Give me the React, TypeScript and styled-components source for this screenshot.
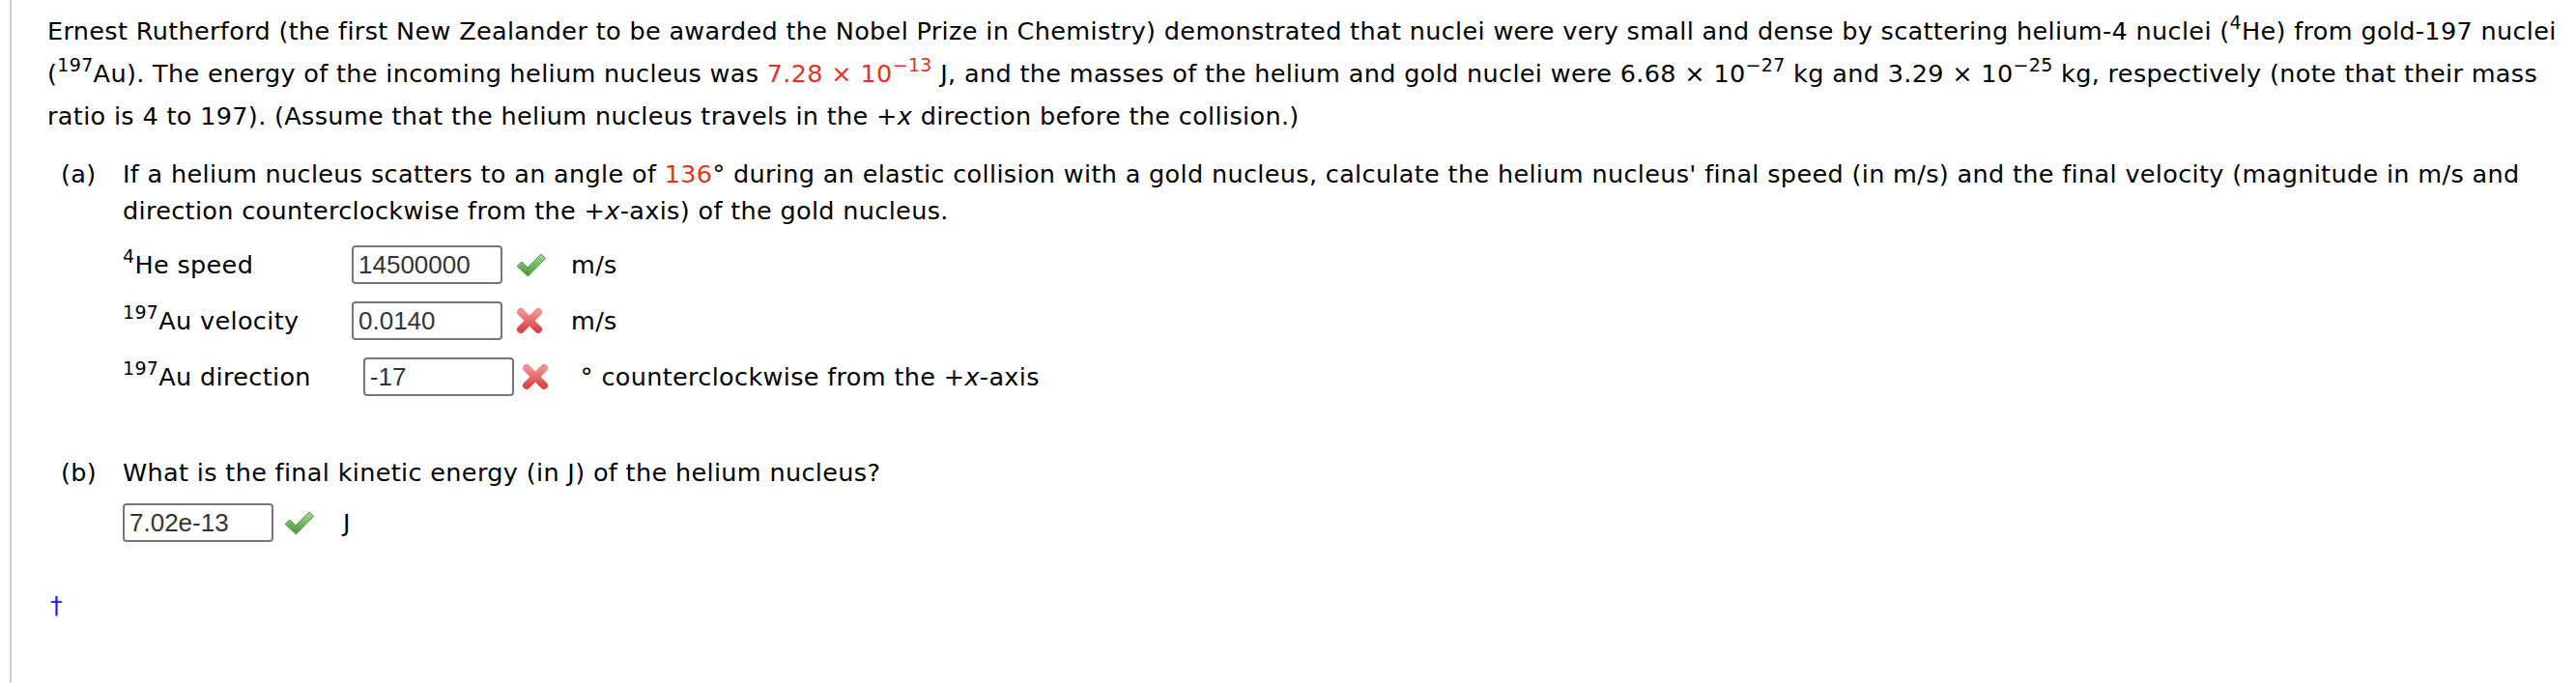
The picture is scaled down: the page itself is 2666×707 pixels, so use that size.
import React from "react";
import styled, { createGlobalStyle } from "styled-components";

const GlobalStyle = createGlobalStyle`
  html, body { margin: 0; padding: 0; background: #fff; }
  body { font-family: "DejaVu Sans", Verdana, sans-serif; color: #000; }
`;

const Page = styled.div`
  margin-left: 10px;
  border-left: 2px solid #d0d0d0;
  min-height: 707px;
  box-sizing: border-box;
  padding: 10px 0 0 37px;
  font-size: 25.5px;
  letter-spacing: 0.34px;
`;

const Intro = styled.p`
  margin: 0;
  line-height: 44px;
  white-space: nowrap;
`;

const Sup = styled.sup`
  font-size: 19px;
  vertical-align: 11px;
  line-height: 0;
`;

const Red = styled.span`
  color: #e8321f;
`;

const Part = styled.div<{ $top: number }>`
  display: flex;
  margin-top: ${(p) => p.$top}px;
  padding-left: 14px;
`;

const PartLabel = styled.div`
  width: 64px;
  flex: none;
  line-height: 38px;
`;

const PartBody = styled.div`
  flex: 1;
  min-width: 0;
`;

const Question = styled.p`
  margin: 0;
  line-height: 38px;
  white-space: nowrap;
`;

const Rows = styled.div<{ $top: number }>`
  display: flex;
  flex-direction: column;
  gap: 18px;
  margin-top: ${(p) => p.$top}px;
`;

const Row = styled.div`
  display: flex;
  align-items: center;
  height: 40px;
`;

const RowLabel = styled.div`
  min-width: 183px;
  margin-right: 54px;
  white-space: nowrap;
`;

const AnswerBox = styled.div`
  width: 156px;
  height: 40px;
  box-sizing: border-box;
  border: 2px solid #767676;
  border-radius: 4px;
  padding: 0 5px;
  display: flex;
  align-items: center;
  font-family: "Liberation Sans", Arial, sans-serif;
  font-size: 26px;
  letter-spacing: 0;
  color: #333;
`;

const IconSlot = styled.span<{ $ml: number }>`
  display: inline-flex;
  margin-left: ${(p) => p.$ml}px;
`;

const Unit = styled.span<{ $ml: number }>`
  margin-left: ${(p) => p.$ml}px;
  white-space: nowrap;
`;

const Footer = styled.div`
  margin-top: 46px;
  padding-left: 3px;
  color: #1a1aff;
  line-height: 38px;
`;

const Check = () => (
  <svg width="33" height="28" viewBox="0 0 33 28">
    <defs>
      <linearGradient id="gck" x1="0" y1="0" x2="0" y2="1">
        <stop offset="0" stopColor="#a3da90" />
        <stop offset="1" stopColor="#449339" />
      </linearGradient>
    </defs>
    <path
      d="M2 15.5 L7 11 L13 17 L27 3 L31.5 7.5 L13.5 26 Z"
      fill="url(#gck)"
      stroke="#54a04a"
      strokeWidth="1"
      strokeLinejoin="round"
    />
  </svg>
);

const Cross = () => (
  <svg width="30" height="30" viewBox="0 0 30 30">
    <defs>
      <linearGradient id="gx" x1="0" y1="0" x2="0" y2="1">
        <stop offset="0" stopColor="#f38e8e" />
        <stop offset="1" stopColor="#dc4646" />
      </linearGradient>
    </defs>
    <g stroke="url(#gx)" strokeWidth="8" strokeLinecap="round">
      <line x1="6" y1="6" x2="24" y2="24" />
      <line x1="24" y1="6" x2="6" y2="24" />
    </g>
  </svg>
);

export default function App() {
  return (
    <>
      <GlobalStyle />
      <Page>
        <Intro>
          Ernest Rutherford (the first New Zealander to be awarded the Nobel Prize in Chemistry) demonstrated that nuclei were very small and dense by scattering helium-4 nuclei (<Sup>4</Sup>He) from gold-197 nuclei
          <br />
          (<Sup>197</Sup>Au). The energy of the incoming helium nucleus was <Red>7.28 × 10<Sup>−13</Sup></Red> J, and the masses of the helium and gold nuclei were 6.68 × 10<Sup>−27</Sup> kg and 3.29 × 10<Sup>−25</Sup> kg, respectively (note that their mass
          <br />
          ratio is 4 to 197). (Assume that the helium nucleus travels in the +<i>x</i> direction before the collision.)
        </Intro>

        <Part $top={19}>
          <PartLabel>(a)</PartLabel>
          <PartBody>
            <Question>
              If a helium nucleus scatters to an angle of <Red>136</Red>° during an elastic collision with a gold nucleus, calculate the helium nucleus' final speed (in m/s) and the final velocity (magnitude in m/s and
              <br />
              direction counterclockwise from the +<i>x</i>-axis) of the gold nucleus.
            </Question>
            <Rows $top={17}>
              <Row>
                <RowLabel><Sup>4</Sup>He speed</RowLabel>
                <AnswerBox>14500000</AnswerBox>
                <IconSlot $ml={13}><Check /></IconSlot>
                <Unit $ml={25}>m/s</Unit>
              </Row>
              <Row>
                <RowLabel><Sup>197</Sup>Au velocity</RowLabel>
                <AnswerBox>0.0140</AnswerBox>
                <IconSlot $ml={13}><Cross /></IconSlot>
                <Unit $ml={28}>m/s</Unit>
              </Row>
              <Row>
                <RowLabel><Sup>197</Sup>Au direction</RowLabel>
                <AnswerBox>-17</AnswerBox>
                <IconSlot $ml={7}><Cross /></IconSlot>
                <Unit $ml={32}>° counterclockwise from the +<i>x</i>-axis</Unit>
              </Row>
            </Rows>
          </PartBody>
        </Part>

        <Part $top={60}>
          <PartLabel>(b)</PartLabel>
          <PartBody>
            <Question>What is the final kinetic energy (in J) of the helium nucleus?</Question>
            <Rows $top={13}>
              <Row>
                <AnswerBox>7.02e-13</AnswerBox>
                <IconSlot $ml={10}><Check /></IconSlot>
                <Unit $ml={29}>J</Unit>
              </Row>
            </Rows>
          </PartBody>
        </Part>

        <Footer>†</Footer>
      </Page>
    </>
  );
}
